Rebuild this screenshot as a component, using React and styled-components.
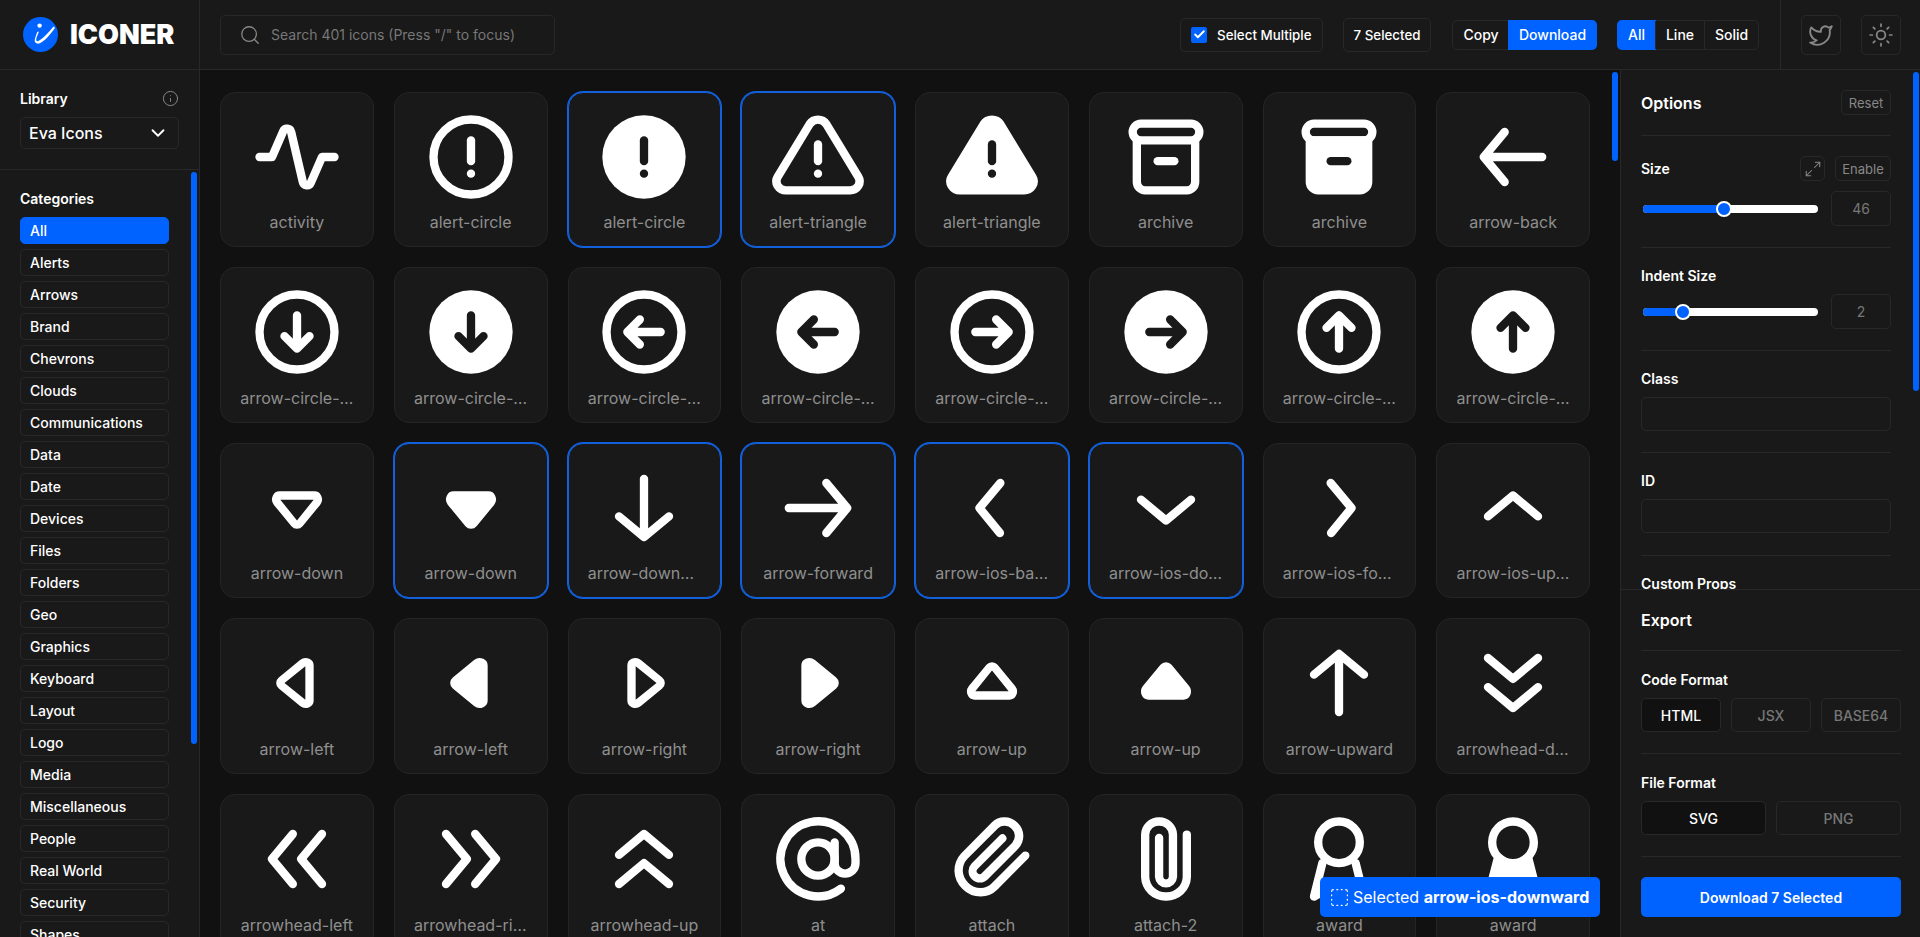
import React from 'react';
import styled, { createGlobalStyle } from 'styled-components';
import { Search, Info, ChevronDown, Check, Twitter, Sun, Maximize2, SquareDashed } from 'lucide-react';

const BLUE = '#0062ff';
const LINE = '#282828';
const PANEL = '#191919';

const Global = createGlobalStyle`
  html, body { margin: 0; padding: 0; height: 100%; background: #111111; overflow: hidden; }
  * { box-sizing: border-box; }
  body { font-family: Inter, "Liberation Sans", sans-serif; color: #fff; }
`;

const Page = styled.div`
  height: 937px;
  display: flex;
  flex-direction: column;
  overflow: hidden;
  position: relative;
`;

const Header = styled.header`
  height: 70px;
  flex: none;
  display: flex;
  align-items: center;
  background: ${PANEL};
  border-bottom: 1px solid ${LINE};
`;
const Brand = styled.div`
  width: 200px;
  height: 100%;
  flex: none;
  display: flex;
  align-items: center;
  gap: 12px;
  padding-left: 23px;
  border-right: 1px solid ${LINE};
`;
const BrandName = styled.span`
  font-size: 27px;
  font-weight: 900;
  letter-spacing: 0;
`;
const SearchArea = styled.div`
  flex: 1;
  padding-left: 20px;
`;
const SearchBox = styled.div`
  width: 335px;
  height: 40px;
  display: flex;
  align-items: center;
  gap: 10px;
  padding-left: 18px;
  border: 1px solid ${LINE};
  border-radius: 5px;
  color: #777;
  font-size: 14px;
`;
const Controls = styled.div`
  display: flex;
  align-items: center;
  height: 100%;
  padding-right: 21px;
`;
const Chip = styled.div`
  height: 34px;
  display: flex;
  align-items: center;
  gap: 10px;
  padding: 0 ${p => p.$pad}px;
  margin-right: ${p => p.$gap}px;
  border: 1px solid ${LINE};
  border-radius: 5px;
  font-size: 13.333px;
  font-weight: 500;
`;
const CheckMark = styled.span`
  width: 16px;
  height: 16px;
  border-radius: 2px;
  background: ${BLUE};
  display: flex;
  align-items: center;
  justify-content: center;
`;
const Segments = styled.div`
  display: flex;
  height: 30px;
  margin-right: ${p => p.$gap}px;
  border: 1px solid ${LINE};
  border-radius: 5px;
`;
const Segment = styled.div`
  width: ${p => p.$w}px;
  display: flex;
  align-items: center;
  justify-content: center;
  font-size: 14px;
  font-weight: 500;
  background: ${p => (p.$on ? BLUE : 'transparent')};
  border-left: ${p => (p.$sep ? `1px solid ${LINE}` : 'none')};
  border-radius: ${p => p.$radius || '0'};
  margin: ${p => (p.$on ? '-1px' : '0')};
`;
const Social = styled.div`
  width: 140px;
  height: 100%;
  flex: none;
  display: flex;
  align-items: center;
  gap: 20px;
  padding-left: 20px;
  border-left: 1px solid ${LINE};
`;
const IconButton = styled.div`
  width: 40px;
  height: 40px;
  display: flex;
  align-items: center;
  justify-content: center;
  border: 1px solid ${LINE};
  border-radius: 5px;
  color: #888;
`;

const Body = styled.div`
  flex: 1;
  min-height: 0;
  display: flex;
`;
const Sidebar = styled.aside`
  width: 200px;
  flex: none;
  position: relative;
  background: ${PANEL};
  border-right: 1px solid ${LINE};
  display: flex;
  flex-direction: column;
  overflow: hidden;
`;
const LibrarySection = styled.div`
  height: 100px;
  flex: none;
  padding: 20px 20px 0;
  border-bottom: 1px solid ${LINE};
`;
const LabelRow = styled.div`
  display: flex;
  align-items: center;
  justify-content: space-between;
  height: 16px;
  margin-bottom: 11px;
  font-size: 14px;
  font-weight: 600;
  color: #888;
`;
const LabelText = styled.span`
  color: #fff;
`;
const Select = styled.div`
  width: 159px;
  height: 32px;
  display: flex;
  align-items: center;
  justify-content: space-between;
  padding: 0 9px 0 8px;
  border: 1px solid ${LINE};
  border-radius: 5px;
  font-size: 16px;
  font-weight: 500;
`;
const CategorySection = styled.div`
  padding: 21px 0 0 20px;
`;
const CategoryTitle = styled.div`
  font-size: 14px;
  font-weight: 600;
  line-height: 16px;
  margin-bottom: 10px;
`;
const CategoryList = styled.div`
  display: flex;
  flex-direction: column;
  gap: 5px;
`;
const Category = styled.div`
  width: 149px;
  height: 27px;
  flex: none;
  display: flex;
  align-items: center;
  padding-left: 9px;
  border: 1px solid ${p => (p.$on ? BLUE : LINE)};
  background: ${p => (p.$on ? BLUE : 'transparent')};
  border-radius: 5px;
  font-size: 14px;
  font-weight: 500;
`;
const Thumb = styled.div`
  position: absolute;
  width: 6px;
  border-radius: 3px;
  background: ${BLUE};
  top: ${p => p.$top}px;
  height: ${p => p.$h}px;
  right: ${p => p.$right}px;
`;

const Main = styled.main`
  flex: 1;
  min-width: 0;
  position: relative;
  padding: 21.6px 30px 0 20px;
  overflow: hidden;
`;
const Grid = styled.div`
  display: grid;
  grid-template-columns: repeat(8, 1fr);
  grid-auto-rows: 155.6px;
  gap: 20px;
`;
const Card = styled.div`
  display: flex;
  flex-direction: column;
  align-items: center;
  padding: 15px 19.28px 0;
  background: ${PANEL};
  border: 1px solid ${p => (p.$on ? '#1260dc' : '#252525')};
  box-shadow: ${p => (p.$on ? '0 0 0 1px #1260dc' : 'none')};
  border-radius: 15px;
  min-width: 0;
`;
const Glyph = styled.svg`
  width: 100px;
  height: 100px;
  margin-top: -1px;
  flex: none;
`;
const CardLabel = styled.div`
  max-width: 100%;
  margin-top: 5.6px;
  font-size: 16px;
  line-height: 20px;
  color: #8f8f8f;
  white-space: nowrap;
  overflow: hidden;
  text-overflow: ellipsis;
`;
const Toast = styled.div`
  position: absolute;
  left: 1120px;
  top: 807px;
  width: 280px;
  height: 40px;
  display: flex;
  align-items: center;
  gap: 3px;
  padding-left: 9px;
  background: ${BLUE};
  border-radius: 5px;
  font-size: 16px;
  white-space: nowrap;
`;
const ToastName = styled.b`
  font-weight: 700;
`;

const Options = styled.aside`
  width: 300px;
  flex: none;
  position: relative;
  background: ${PANEL};
  border-left: 1px solid ${LINE};
  display: flex;
  flex-direction: column;
  overflow: hidden;
`;
const OptionsScroll = styled.div`
  height: 519px;
  flex: none;
  padding: 0 29px 0 20px;
  overflow: hidden;
`;
const PanelHead = styled.div`
  height: ${p => p.$h}px;
  display: flex;
  align-items: center;
  justify-content: space-between;
  border-bottom: 1px solid ${LINE};
  font-size: 16px;
  font-weight: 600;
`;
const SmallButton = styled.div`
  height: 25px;
  width: ${p => p.$w}px;
  display: flex;
  align-items: center;
  justify-content: center;
  border: 1px solid ${LINE};
  border-radius: 5px;
  font-size: 13px;
  font-weight: 400;
  color: #888;
`;
const Field = styled.div`
  height: ${p => p.$h}px;
  flex: none;
  padding-top: ${p => p.$pt}px;
  border-bottom: ${p => (p.$open ? 'none' : `1px solid ${LINE}`)};
`;
const FieldHead = styled.div`
  display: flex;
  align-items: center;
  gap: 10px;
  height: 25px;
  font-size: 14px;
  font-weight: 600;
`;
const Grow = styled.span`
  flex: 1;
`;
const FieldLabel = styled.div`
  font-size: 14px;
  font-weight: 600;
  line-height: 16px;
  margin-bottom: 10px;
`;
const SliderRow = styled.div`
  display: flex;
  align-items: center;
  justify-content: space-between;
  height: 35px;
  margin-top: ${p => p.$mt}px;
`;
const Track = styled.div`
  position: relative;
  width: 175px;
  height: 8px;
  margin-left: 2px;
  background: #fff;
  border-radius: 4px;
`;
const TrackFill = styled.div`
  height: 100%;
  background: ${BLUE};
  border-radius: 4px 0 0 4px;
`;
const TrackThumb = styled.div`
  position: absolute;
  top: -4px;
  width: 16px;
  height: 16px;
  margin-left: -8px;
  border-radius: 50%;
  background: ${BLUE};
  border: 2px solid #fff;
`;
const ValueBox = styled.div`
  width: 60px;
  height: 35px;
  display: flex;
  align-items: center;
  justify-content: center;
  border: 1px solid ${LINE};
  border-radius: 5px;
  font-size: 14px;
  color: #777;
`;
const Input = styled.div`
  width: 250px;
  height: 34px;
  border: 1px solid ${LINE};
  border-radius: 5px;
`;
const ExportPanel = styled.div`
  flex: 1;
  min-height: 0;
  padding: 0 19px 0 20px;
  border-top: 1px solid ${LINE};
`;
const FormatRow = styled.div`
  display: flex;
  gap: 10px;
`;
const FormatButton = styled.div`
  flex: 1;
  height: 34px;
  display: flex;
  align-items: center;
  justify-content: center;
  border: 1px solid ${LINE};
  border-radius: 5px;
  background: ${p => (p.$on ? '#111111' : 'transparent')};
  color: ${p => (p.$on ? '#fff' : '#777')};
  font-size: 14px;
  font-weight: 500;
`;
const DownloadButton = styled.div`
  height: 40px;
  margin-top: 20px;
  display: flex;
  align-items: center;
  justify-content: center;
  background: ${BLUE};
  border-radius: 5px;
  font-size: 14px;
  font-weight: 600;
`;

const Logo = () => (
  <svg width="35" height="35" viewBox="0 0 35 35" aria-label="Iconer logo">
    <circle cx="17.5" cy="17.5" r="17.5" fill={BLUE} />
    <circle cx="16.6" cy="8.6" r="2.2" fill="#fff" />
    <path d="M16 14.500c-1.200 3-2.700 6-2.800 8-.1 1.800 1.300 2.100 3 1.100 3.900-2.200 9.300-7.900 14.300-14.100l1.500 1.300c-4.300 6.500-10 13-14.700 15.300-3.200 1.500-5.900 0-5.600-3 .2-2 1.400-5 2.500-8.100z" fill="#fff" />
  </svg>
);

const W = '#fff';
const D = PANEL;
const S = ({ d, c = W, children }) => (
  <g fill="none" stroke={c} strokeWidth="2" strokeLinecap="round" strokeLinejoin="round">
    {d && <path d={d} />}
    {children}
  </g>
);
const F = ({ d }) => <path d={d} fill={W} fillRule="evenodd" />;

const TRI = 'M12 17a1.72 1.72 0 0 1-1.33-.64l-4.21-5.1a2.1 2.1 0 0 1-.26-2.21A1.76 1.76 0 0 1 7.79 8h8.42a1.76 1.76 0 0 1 1.59 1.05 2.1 2.1 0 0 1-.26 2.21l-4.21 5.1A1.72 1.72 0 0 1 12 17z';
const TRI_HOLE = 'M8 10h8l-4 5z';
const WARN = 'M21.7 16.8 14 4.1a2.4 2.4 0 0 0-4 0L2.300 16.800a2 2 0 0 0 0 2.100A2.400 2.400 0 0 0 4.300 20h15.400a2.400 2.400 0 0 0 2-1.100 2 2 0 0 0 0-2.100z';

const CircleOutline = ({ d }) => (
  <>
    <S><circle cx="12" cy="12" r="9" /></S>
    <S d={d} />
  </>
);
const CircleSolid = ({ d }) => (
  <>
    <circle cx="12" cy="12" r="10" fill={W} />
    <S d={d} c={D} />
  </>
);
const Bang = ({ c, y1 = 8, y2 = 13 }) => (
  <>
    <path d={`M12 ${y1}v${y2 - y1}`} fill="none" stroke={c} strokeWidth="2" strokeLinecap="round" />
    <circle cx="12" cy="16" r="1" fill={c} />
  </>
);
const ArrowDownTri = ({ rot = 0, hole }) => (
  <g transform={`rotate(${rot} 12 12)`}>
    <F d={hole ? TRI + TRI_HOLE : TRI} />
  </g>
);

const icons = [
  ['activity', <S d="M3 12h3l2.700-6.200a1 1 0 0 1 1.900.2l2.800 12a1 1 0 0 0 1.900.2L18 12h3" />],
  ['alert-circle', <><S><circle cx="12" cy="12" r="9" /></S><Bang c={W} /></>],
  ['alert-circle', <><circle cx="12" cy="12" r="10" fill={W} /><Bang c={D} /></>, 1],
  ['alert-triangle', <><S d={WARN} /><Bang c={W} y1={9} /></>, 1],
  ['alert-triangle', <><path d={WARN} fill={W} stroke={W} strokeWidth="2" strokeLinejoin="round" /><Bang c={D} y1={9} /></>],
  ['archive', <><S><rect x="4" y="4" width="16" height="4" rx="2" /><path d="M5 8v10a2 2 0 0 0 2 2h10a2 2 0 0 0 2-2V8" /><path d="M10 13h4" /></S></>],
  ['archive', <><path d="M5 8v10a2 2 0 0 0 2 2h10a2 2 0 0 0 2-2V8z" fill={W} stroke={W} strokeWidth="2" /><S><rect x="4" y="4" width="16" height="4" rx="2" /></S><S d="M10 13h4" c={D} /></>],
  ['arrow-back', <S d="M19 12H5M10 6l-5 6 5 6" />],
  ['arrow-circle-down', <CircleOutline d="M12 8v8M9 13l3 3 3-3" />],
  ['arrow-circle-down', <CircleSolid d="M12 8v8M9 13l3 3 3-3" />],
  ['arrow-circle-left', <CircleOutline d="M16 12H8M11 9l-3 3 3 3" />],
  ['arrow-circle-left', <CircleSolid d="M16 12H8M11 9l-3 3 3 3" />],
  ['arrow-circle-right', <CircleOutline d="M8 12h8M13 9l3 3-3 3" />],
  ['arrow-circle-right', <CircleSolid d="M8 12h8M13 9l3 3-3 3" />],
  ['arrow-circle-up', <CircleOutline d="M12 16V8M9 11l3-3 3 3" />],
  ['arrow-circle-up', <CircleSolid d="M12 16V8M9 11l3-3 3 3" />],
  ['arrow-down', <ArrowDownTri hole />],
  ['arrow-down', <ArrowDownTri />, 1],
  ['arrow-downward', <S d="M12 5v14M6 14l6 5 6-5" />, 1],
  ['arrow-forward', <S d="M5 12h14M14 6l5 6-5 6" />, 1],
  ['arrow-ios-back', <S d="M14 6l-5 6 4.900 6" />, 1],
  ['arrow-ios-downward', <S d="M6 10l6 5 6-5" />, 1],
  ['arrow-ios-forward', <S d="M10 6l5 6-4.900 6" />],
  ['arrow-ios-upward', <S d="M6 14l6-5 6 5" />],
  ['arrow-left', <ArrowDownTri rot={90} hole />],
  ['arrow-left', <ArrowDownTri rot={90} />],
  ['arrow-right', <ArrowDownTri rot={-90} hole />],
  ['arrow-right', <ArrowDownTri rot={-90} />],
  ['arrow-up', <ArrowDownTri rot={180} hole />],
  ['arrow-up', <ArrowDownTri rot={180} />],
  ['arrow-upward', <S d="M12 19V5M6 10l6-5 6 5" />],
  ['arrowhead-down', <S d="M6 6l6 5 6-5M6 13l6 5 6-5" />],
  ['arrowhead-left', <S d="M11 6l-5 6 5 6M18 6l-5 6 5 6" />],
  ['arrowhead-right', <S d="M13 6l5 6-5 6M6 6l5 6-5 6" />],
  ['arrowhead-up', <S d="M6 18l6-5 6 5M6 11l6-5 6 5" />],
  ['at', <S><circle cx="12" cy="12" r="4" /><path d="M16 8v5a2.500 2.500 0 0 0 5 0v-1a9 9 0 1 0-3.500 7.100" /></S>],
  ['attach', <F d="M9.290 21a6.230 6.230 0 0 1-4.430-1.880 6 6 0 0 1-.220-8.490L12 3.200A4.110 4.110 0 0 1 15 2a4.480 4.480 0 0 1 3.190 1.350 4.360 4.360 0 0 1 .150 6.130l-7.400 7.430a2.540 2.540 0 0 1-1.810.750 2.720 2.720 0 0 1-1.950-.820 2.680 2.680 0 0 1-.080-3.770l6.830-6.860a1 1 0 0 1 1.370 1.410l-6.830 6.860a.680.680 0 0 0 .080.950.780.780 0 0 0 .530.230.560.560 0 0 0 .400-.160l7.390-7.430a2.360 2.360 0 0 0-.150-3.310 2.380 2.380 0 0 0-3.270-.150L6.060 12a4 4 0 0 0 .220 5.670 4.220 4.220 0 0 0 3 1.290 3.670 3.670 0 0 0 2.610-1.060l7.390-7.430a1 1 0 1 1 1.420 1.410l-7.390 7.430A5.650 5.650 0 0 1 9.29 21z" />],
  ['attach-2', <F d="M12 22a5.860 5.860 0 0 1-6-5.700V6.130A4.240 4.240 0 0 1 10.330 2a4.240 4.240 0 0 1 4.340 4.130v10.180a2.670 2.670 0 0 1-5.330 0V6.920a1 1 0 0 1 1-1 1 1 0 0 1 1 1v9.390a.670.670 0 0 0 1.330 0V6.130A2.250 2.250 0 0 0 10.330 4 2.250 2.250 0 0 0 8 6.130V16.300a3.860 3.860 0 0 0 4 3.700 3.860 3.860 0 0 0 4-3.700V6.130a1 1 0 1 1 2 0V16.300a5.860 5.860 0 0 1-6 5.700z" />],
  ['award', <S><circle cx="12" cy="8" r="5" /><path d="M8 13 6 21l6-3.400 6 3.400-2-8" /></S>],
  ['award', <F d="M19 20.750l-2.310-9A5.940 5.940 0 0 0 18 8 6 6 0 0 0 6 8a5.940 5.940 0 0 0 1.340 3.770L5 20.750a1 1 0 0 0 1.480 1.110l5.330-3.130 5.360 3.140A1.080 1.080 0 0 0 18 22a1 1 0 0 0 1-1.250zM12 4a4 4 0 1 1-4 4 4 4 0 0 1 4-4z" />],
];

const categories = ['All', 'Alerts', 'Arrows', 'Brand', 'Chevrons', 'Clouds', 'Communications', 'Data', 'Date', 'Devices', 'Files', 'Folders', 'Geo', 'Graphics', 'Keyboard', 'Layout', 'Logo', 'Media', 'Miscellaneous', 'People', 'Real World', 'Security', 'Shapes'];

const Slider = ({ pct, value, mt }) => (
  <SliderRow $mt={mt}>
    <Track>
      <TrackFill style={{ width: `${pct}%` }} />
      <TrackThumb style={{ left: `${pct}%` }} />
    </Track>
    <ValueBox>{value}</ValueBox>
  </SliderRow>
);

export default function App() {
  return (
    <Page>
      <Global />
      <Header>
        <Brand>
          <Logo />
          <BrandName>ICONER</BrandName>
        </Brand>
        <SearchArea>
          <SearchBox>
            <Search size={22} strokeWidth={1.4} color="#888" />
            Search 401 icons (Press "/" to focus)
          </SearchBox>
        </SearchArea>
        <Controls>
          <Chip $pad={10.5} $gap={20}>
            <CheckMark><Check size={13} strokeWidth={3.5} color="#fff" /></CheckMark>
            Select Multiple
          </Chip>
          <Chip $pad={9.5} $gap={21}>7 Selected</Chip>
          <Segments $gap={20}>
            <Segment $w={56}>Copy</Segment>
            <Segment $w={89} $on $radius="0 5px 5px 0">Download</Segment>
          </Segments>
          <Segments $gap={0}>
            <Segment $w={39} $on $radius="5px 0 0 5px">All</Segment>
            <Segment $w={49} $sep>Line</Segment>
            <Segment $w={54} $sep>Solid</Segment>
          </Segments>
        </Controls>
        <Social>
          <IconButton><Twitter size={26} strokeWidth={1.7} /></IconButton>
          <IconButton><Sun size={26} strokeWidth={1.6} /></IconButton>
        </Social>
      </Header>
      <Body>
        <Sidebar>
          <LibrarySection>
            <LabelRow>
              <LabelText>Library</LabelText>
              <Info size={17} strokeWidth={1.4} />
            </LabelRow>
            <Select>
              Eva Icons
              <ChevronDown size={22} strokeWidth={2} />
            </Select>
          </LibrarySection>
          <CategorySection>
            <CategoryTitle>Categories</CategoryTitle>
            <CategoryList>
              {categories.map((c, i) => (
                <Category key={c} $on={i === 0}>{c}</Category>
              ))}
            </CategoryList>
          </CategorySection>
          <Thumb $top={102} $h={572} $right={2} />
        </Sidebar>
        <Main>
          <Grid>
            {icons.map(([name, art, on], i) => (
              <Card key={i} $on={!!on}>
                <Glyph viewBox="0 0 24 24">{art}</Glyph>
                <CardLabel>{name}</CardLabel>
              </Card>
            ))}
          </Grid>
          <Thumb $top={2} $h={89} $right={2} />
          <Toast>
            <SquareDashed size={21} strokeWidth={1.3} />
            <span>Selected <ToastName>arrow-ios-downward</ToastName></span>
          </Toast>
        </Main>
        <Options>
          <OptionsScroll>
            <PanelHead $h={66}>
              Options
              <SmallButton $w={50}>Reset</SmallButton>
            </PanelHead>
            <Field $h={112} $pt={20}>
              <FieldHead>
                Size
                <Grow />
                <SmallButton $w={25}><Maximize2 size={18} strokeWidth={1.4} /></SmallButton>
                <SmallButton $w={56}>Enable</SmallButton>
              </FieldHead>
              <Slider pct={46} value="46" mt={10} />
            </Field>
            <Field $h={102.7} $pt={20}>
              <FieldLabel>Indent Size</FieldLabel>
              <Slider pct={23} value="2" mt={0} />
            </Field>
            <Field $h={102.7} $pt={20}>
              <FieldLabel>Class</FieldLabel>
              <Input />
            </Field>
            <Field $h={102.7} $pt={20}>
              <FieldLabel>ID</FieldLabel>
              <Input />
            </Field>
            <Field $h={40} $pt={20} $open>
              <FieldLabel>Custom Props</FieldLabel>
            </Field>
          </OptionsScroll>
          <ExportPanel>
            <PanelHead $h={61}>Export</PanelHead>
            <Field $h={103} $pt={21}>
              <FieldLabel>Code Format</FieldLabel>
              <FormatRow>
                <FormatButton $on>HTML</FormatButton>
                <FormatButton>JSX</FormatButton>
                <FormatButton>BASE64</FormatButton>
              </FormatRow>
            </Field>
            <Field $h={103} $pt={21}>
              <FieldLabel>File Format</FieldLabel>
              <FormatRow>
                <FormatButton $on>SVG</FormatButton>
                <FormatButton>PNG</FormatButton>
              </FormatRow>
            </Field>
            <DownloadButton>Download 7 Selected</DownloadButton>
          </ExportPanel>
          <Thumb $top={2} $h={319} $right={1} />
        </Options>
      </Body>
    </Page>
  );
}
